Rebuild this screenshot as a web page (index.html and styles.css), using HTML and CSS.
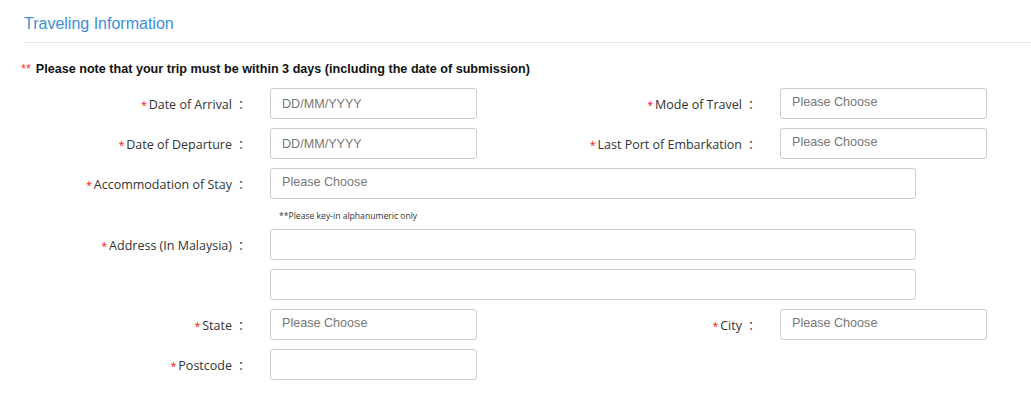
FILE: index.html
```html
<!DOCTYPE html>
<html lang="en">
<head>
    <meta charset="UTF-8">
    <meta name="viewport" content="width=device-width, initial-scale=1.0">
    <title>Traveling Information</title>
    <link rel="stylesheet" href="styles.css">
</head>
<body>
    <h2 class="section-title">Traveling Information</h2>
    <p class="note"><span class="note-mark">**</span>Please note that your trip must be within 3 days (including the date of submission)</p>

    <form class="travel-form">
        <div class="row">
            <div class="field">
                <label class="label"><span class="req">*</span>Date of Arrival<span class="colon">：</span></label>
                <input class="input" type="text" placeholder="DD/MM/YYYY">
            </div>
            <div class="field">
                <label class="label"><span class="req">*</span>Mode of Travel<span class="colon">：</span></label>
                <input class="input select" type="text" placeholder="Please Choose">
            </div>
        </div>
        <div class="row">
            <div class="field">
                <label class="label"><span class="req">*</span>Date of Departure<span class="colon">：</span></label>
                <input class="input" type="text" placeholder="DD/MM/YYYY">
            </div>
            <div class="field">
                <label class="label"><span class="req">*</span>Last Port of Embarkation<span class="colon">：</span></label>
                <input class="input select" type="text" placeholder="Please Choose">
            </div>
        </div>
        <div class="row">
            <div class="field wide">
                <label class="label"><span class="req">*</span>Accommodation of Stay<span class="colon">：</span></label>
                <input class="input input-wide select" type="text" placeholder="Please Choose">
            </div>
        </div>
        <p class="hint">**Please key-in alphanumeric only</p>
        <div class="row">
            <div class="field wide">
                <label class="label"><span class="req">*</span>Address (In Malaysia)<span class="colon">：</span></label>
                <input class="input input-wide" type="text">
            </div>
        </div>
        <div class="row">
            <div class="field wide">
                <span class="label"></span>
                <input class="input input-wide" type="text">
            </div>
        </div>
        <div class="row">
            <div class="field">
                <label class="label"><span class="req">*</span>State<span class="colon">：</span></label>
                <input class="input select" type="text" placeholder="Please Choose">
            </div>
            <div class="field">
                <label class="label"><span class="req">*</span>City<span class="colon">：</span></label>
                <input class="input select" type="text" placeholder="Please Choose">
            </div>
        </div>
        <div class="row">
            <div class="field">
                <label class="label"><span class="req">*</span>Postcode<span class="colon">：</span></label>
                <input class="input" type="text">
            </div>
        </div>
    </form>
</body>
</html>
```

FILE: styles.css
```css
body {
    margin: 0;
    padding: 0;
    background-color: #fff;
    color: #333;
    font-family: "Liberation Sans", Arial, sans-serif;
}
.section-title {
    margin: 0 0 0 24px;
    padding: 14px 0 8px;
    font-size: 16px;
    line-height: 20px;
    font-weight: normal;
    color: #3b8ed8;
    border-bottom: 1px solid #e5e5e5;
}
.note {
    margin: 18px 0 0;
    padding-left: 21px;
    font-size: 12.6px;
    line-height: 16px;
    font-weight: bold;
    color: #111;
}
.note-mark {
    color: #f33;
    font-weight: normal;
    margin-right: 5px;
}
.travel-form {
    margin-top: 11px;
}
.row {
    display: flex;
    height: 31px;
    margin-bottom: 9px;
}
.field {
    display: flex;
    align-items: center;
    width: 510px;
}
.field.wide {
    width: auto;
}
.label {
    width: 250px;
    margin-right: 20px;
    text-align: right;
    font-family: "Open Sans", "Noto Sans CJK SC", sans-serif;
    font-size: 12.5px;
    color: #333;
    white-space: nowrap;
}
.colon {
    font-family: "Noto Sans CJK SC", sans-serif;
    font-size: 12px;
    margin-left: 6px;
}
.req {
    color: #f00;
    font-size: 10px;
    margin-right: 2px;
}
.input {
    box-sizing: border-box;
    width: 207px;
    height: 31px;
    padding: 0 11px;
    border: 1px solid #ccc;
    border-radius: 3px;
    font-family: "Liberation Sans", Arial, sans-serif;
    font-size: 12.6px;
    color: #333;
    outline: none;
}
.input::placeholder {
    color: #777;
}
.select {
    padding-bottom: 3px;
}
.input-wide {
    width: 646px;
}
.hint {
    margin: 0 0 6px 279px;
    padding-top: 1px;
    font-family: "Open Sans", "Noto Sans CJK SC", sans-serif;
    font-size: 8.6px;
    line-height: 14px;
    color: #333;
}
```
